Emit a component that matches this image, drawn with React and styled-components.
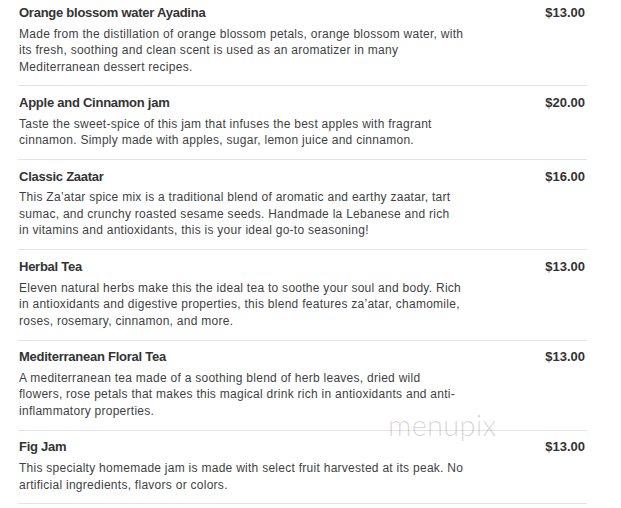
import React from "react";
import styled, { createGlobalStyle } from "styled-components";

const GlobalStyle = createGlobalStyle`
  body {
    margin: 0;
    background: #fff;
    font-family: Arial, "Liberation Sans", sans-serif;
  }
`;

const Page = styled.div`
  position: relative;
  width: 621px;
  height: 508px;
  overflow: hidden;
  background: #fff;
`;

const List = styled.div`
  margin-left: 18px;
  width: 569px;
`;

const Row = styled.div`
  display: grid;
  grid-template-columns: 1fr auto;
  padding: 8.5px 2px 10.4px 1px;
  border-bottom: 1px solid #e3e3e3;

  &:first-child {
    padding-top: 4.8px;
  }
`;

const Info = styled.div`
  display: flex;
  flex-direction: column;
  gap: 4.8px;
`;

const Title = styled.h3`
  margin: 0;
  font-size: 13px;
  line-height: 16px;
  font-weight: bold;
  letter-spacing: -0.25px;
  color: #333;
`;

const Desc = styled.p`
  margin: 0;
  font-size: 12px;
  line-height: 16.5px;
  letter-spacing: 0.27px;
  color: #3f3f3f;
`;

const Line = styled.span`
  display: block;
  white-space: nowrap;
`;

const Price = styled.span`
  font-size: 13px;
  line-height: 16px;
  font-weight: bold;
  color: #333;
`;

const Watermark = styled.div`
  position: absolute;
  left: 388px;
  top: 407px;
  font-family: Lato, "Open Sans", sans-serif;
  font-weight: 300;
  font-size: 29px;
  letter-spacing: 0.3px;
  color: rgba(0, 0, 0, 0.17);
  pointer-events: none;
`;

const items = [
  {
    title: "Orange blossom water Ayadina",
    price: "$13.00",
    desc: [
      "Made from the distillation of orange blossom petals, orange blossom water, with",
      "its fresh, soothing and clean scent is used as an aromatizer in many",
      "Mediterranean dessert recipes.",
    ],
  },
  {
    title: "Apple and Cinnamon jam",
    price: "$20.00",
    desc: [
      "Taste the sweet-spice of this jam that infuses the best apples with fragrant",
      "cinnamon. Simply made with apples, sugar, lemon juice and cinnamon.",
    ],
  },
  {
    title: "Classic Zaatar",
    price: "$16.00",
    desc: [
      "This Za\u2019atar spice mix is a traditional blend of aromatic and earthy zaatar, tart",
      "sumac, and crunchy roasted sesame seeds. Handmade la Lebanese and rich",
      "in vitamins and antioxidants, this is your ideal go-to seasoning!",
    ],
  },
  {
    title: "Herbal Tea",
    price: "$13.00",
    desc: [
      "Eleven natural herbs make this the ideal tea to soothe your soul and body. Rich",
      "in antioxidants and digestive properties, this blend features za\u2019atar, chamomile,",
      "roses, rosemary, cinnamon, and more.",
    ],
  },
  {
    title: "Mediterranean Floral Tea",
    price: "$13.00",
    desc: [
      "A mediterranean tea made of a soothing blend of herb leaves, dried wild",
      "flowers, rose petals that makes this magical drink rich in antioxidants and anti-",
      "inflammatory properties.",
    ],
  },
  {
    title: "Fig Jam",
    price: "$13.00",
    desc: [
      "This specialty homemade jam is made with select fruit harvested at its peak. No",
      "artificial ingredients, flavors or colors.",
    ],
  },
];

export default function App() {
  return (
    <Page>
      <GlobalStyle />
      <List>
        {items.map((item) => (
          <Row key={item.title}>
            <Info>
              <Title>{item.title}</Title>
              <Desc>
                {item.desc.map((line) => (
                  <Line key={line}>{line}</Line>
                ))}
              </Desc>
            </Info>
            <Price>{item.price}</Price>
          </Row>
        ))}
      </List>
      <Watermark>menupix</Watermark>
    </Page>
  );
}
